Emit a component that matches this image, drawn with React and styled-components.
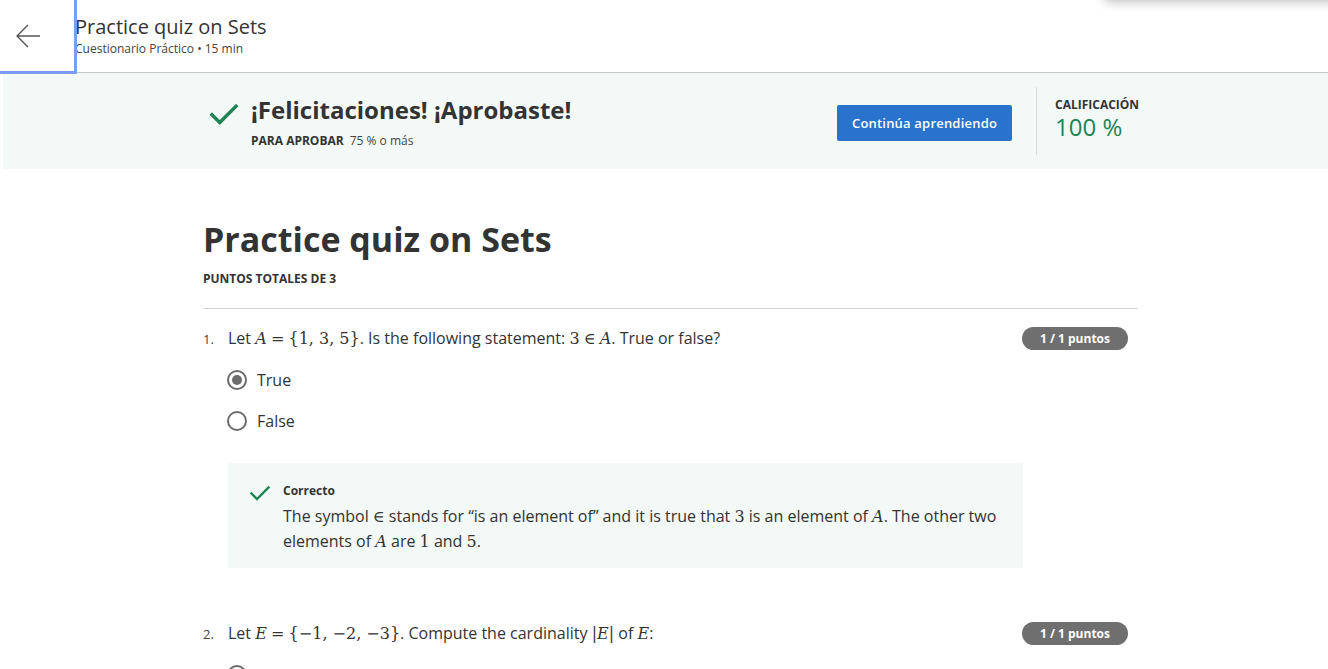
import React from 'react';
import styled, { createGlobalStyle } from 'styled-components';

const COLORS = {
  TEXT: '#373a3c',
  MUTED: '#555',
  GREEN: '#1f8354',
  MINT: '#f2f9f6',
  BLUE: '#2a73cc',
  BADGE: '#6f6f6f',
  LINE: '#d6d6d6',
};

const GlobalStyle = createGlobalStyle`
  html, body {
    margin: 0;
    padding: 0;
    background: #fff;
    font-family: "Open Sans", "Noto Sans", sans-serif;
    color: ${COLORS.TEXT};
  }
`;

const Root = styled.div`
  width: 1328px;
  height: 669px;
  overflow: hidden;
  position: relative;
`;

const TopShadow = styled.div`
  position: absolute;
  top: -40px;
  left: 1105px;
  width: 260px;
  height: 40px;
  background: #fff;
  box-shadow: 0 2px 10px rgba(0, 0, 0, 0.25);
`;

const Header = styled.header`
  height: 72px;
  display: flex;
  align-items: flex-start;
  border-bottom: 1px solid #c8c8c8;
`;

const BackBtn = styled.button`
  width: 77px;
  height: 74px;
  flex-shrink: 0;
  box-sizing: border-box;
  border: none;
  border-right: 3px solid #7b9cf5;
  border-bottom: 3px solid #7b9cf5;
  background: #fff;
  display: flex;
  align-items: center;
  padding: 0 0 0 15px;
  margin-bottom: -2px;
  position: relative;
  z-index: 1;
`;

const HeaderText = styled.div`
  padding-top: 13px;
  margin-left: -2px;
`;

const HeaderTitle = styled.div`
  font-size: 20px;
  line-height: 28px;
  color: #333;
`;

const HeaderSub = styled.div`
  font-size: 12px;
  line-height: 16px;
  color: #444;
`;

const Banner = styled.section`
  margin-left: 3px;
  height: 96px;
  background: ${COLORS.MINT};
  display: flex;
  align-items: flex-start;
  padding-left: 204px;
  box-sizing: border-box;
`;

const BannerMain = styled.div`
  display: flex;
  gap: 10px;
  padding-top: 21px;
  width: 630px;
`;

const CheckWrap = styled.div`
  padding-top: ${(p) => p.top || 0}px;
`;

const BannerTitle = styled.h2`
  margin: 0;
  font-size: 24px;
  line-height: 32px;
  font-weight: 700;
  color: #333;
`;

const PassLine = styled.div`
  margin-top: 7px;
  font-size: 12px;
  line-height: 16px;
  color: #444;

  b {
    font-weight: 700;
    color: #333;
    margin-right: 6px;
  }
`;

const PrimaryBtn = styled.button`
  margin-top: 32px;
  width: 175px;
  height: 36px;
  background: ${COLORS.BLUE};
  color: #fff;
  border: none;
  border-radius: 2px;
  font-family: inherit;
  font-size: 13px;
  font-weight: 600;
  letter-spacing: 0.2px;
`;

const Divider = styled.div`
  width: 1px;
  height: 68px;
  margin: 14px 18px 0 24px;
  background: #dcdcdc;
`;

const Grade = styled.div`
  padding-top: 24px;
`;

const GradeLabel = styled.div`
  font-size: 12px;
  line-height: 16px;
  font-weight: 700;
  color: #333;
`;

const GradeValue = styled.div`
  font-size: 24px;
  line-height: 28px;
  color: ${COLORS.GREEN};
`;

const Content = styled.main`
  width: 935px;
  margin-left: 203px;
  padding-top: 49px;
`;

const Title = styled.h1`
  margin: 0;
  font-size: 34px;
  line-height: 42px;
  font-weight: 700;
  color: #333;
`;

const Points = styled.div`
  margin-top: 11px;
  font-size: 12px;
  line-height: 16px;
  font-weight: 700;
  color: #333;
  padding-bottom: 21px;
  border-bottom: 1px solid ${COLORS.LINE};
`;

const Question = styled.section`
  padding-top: ${(p) => p.top}px;
`;

const QRow = styled.div`
  display: flex;
  align-items: center;
  padding-right: 10px;
`;

const QNum = styled.span`
  width: 25px;
  font-size: 13px;
  color: #444;
`;

const QText = styled.div`
  flex: 1;
  font-size: 16px;
  line-height: 24px;
  color: #333;
`;

const M = styled.span`
  font-family: "DejaVu Serif", "Liberation Serif", serif;
  font-style: ${(p) => (p.up ? 'normal' : 'italic')};
  font-size: 16px;
`;

const Badge = styled.span`
  background: ${COLORS.BADGE};
  color: #fff;
  font-size: 12px;
  font-weight: 700;
  border-radius: 12px;
  height: 23px;
  line-height: 23px;
  padding: 0 18px;
`;

const Options = styled.div`
  margin-top: 17px;
  margin-left: 24px;
  display: flex;
  flex-direction: column;
  gap: 17px;
`;

const Option = styled.label`
  display: flex;
  align-items: center;
  gap: 10px;
  font-size: 16px;
  line-height: 24px;
  color: #333;
`;

const Radio = styled.span`
  width: 20px;
  height: 20px;
  box-sizing: border-box;
  border-radius: 50%;
  border: 2px solid #6b6b6b;
  display: flex;
  align-items: center;
  justify-content: center;

  &::after {
    content: '';
    width: 10px;
    height: 10px;
    border-radius: 50%;
    background: ${(p) => (p.checked ? '#6b6b6b' : 'transparent')};
  }
`;

const Feedback = styled.div`
  margin: 30px 0 0 25px;
  width: 795px;
  height: 105px;
  box-sizing: border-box;
  background: ${COLORS.MINT};
  display: flex;
  gap: 11px;
  padding: 18px 20px 0 20px;
`;

const FbLabel = styled.div`
  font-size: 12px;
  line-height: 18px;
  font-weight: 700;
  color: #333;
  margin-top: 1px;
`;

const FbText = styled.p`
  margin: 4px 0 0;
  font-size: 16px;
  line-height: 24px;
  color: #333;
`;

const Check = ({ size = 30 }) => (
  <svg width={size} height={size} viewBox="0 0 24 24" fill="none">
    <path d="M3.5 12.5l5.5 5.5L20.5 6.5" stroke={COLORS.GREEN} strokeWidth="2.4" strokeLinecap="square" />
  </svg>
);

const Arrow = () => (
  <svg width="26" height="26" viewBox="0 0 26 26" fill="none">
    <path d="M25 13H2M13 2L2 13l11 11" stroke="#555" strokeWidth="1.4" />
  </svg>
);

function App() {
  return (
    <Root>
      <GlobalStyle />
      <TopShadow />
      <Header>
        <BackBtn aria-label="Volver">
          <Arrow />
        </BackBtn>
        <HeaderText>
          <HeaderTitle>Practice quiz on Sets</HeaderTitle>
          <HeaderSub>Cuestionario Práctico • 15 min</HeaderSub>
        </HeaderText>
      </Header>

      <Banner>
        <BannerMain>
          <CheckWrap top={3}>
            <Check size={34} />
          </CheckWrap>
          <div>
            <BannerTitle>¡Felicitaciones! ¡Aprobaste!</BannerTitle>
            <PassLine>
              <b>PARA APROBAR</b>75 % o más
            </PassLine>
          </div>
        </BannerMain>
        <PrimaryBtn>Continúa aprendiendo</PrimaryBtn>
        <Divider />
        <Grade>
          <GradeLabel>CALIFICACIÓN</GradeLabel>
          <GradeValue>100 %</GradeValue>
        </Grade>
      </Banner>

      <Content>
        <Title>Practice quiz on Sets</Title>
        <Points>PUNTOS TOTALES DE 3</Points>

        <Question top={17}>
          <QRow>
            <QNum>1.</QNum>
            <QText>
              Let <M>A</M> <M up>=</M> <M up>{'{1, 3, 5}'}</M>. Is the following statement: <M up>3</M> <M up>∈</M> <M>A</M>. True or false?
            </QText>
            <Badge>1 / 1 puntos</Badge>
          </QRow>
          <Options>
            <Option>
              <Radio checked />
              True
            </Option>
            <Option>
              <Radio />
              False
            </Option>
          </Options>
          <Feedback>
            <CheckWrap top={0}>
              <Check size={24} />
            </CheckWrap>
            <div>
              <FbLabel>Correcto</FbLabel>
              <FbText>
                The symbol <M up>∈</M> stands for “is an element of” and it is true that <M up>3</M> is an element of <M>A</M>. The other two elements of <M>A</M> are <M up>1</M> and <M up>5</M>.
              </FbText>
            </div>
          </Feedback>
        </Question>

        <Question top={53}>
          <QRow>
            <QNum>2.</QNum>
            <QText>
              Let <M>E</M> <M up>=</M> <M up>{'{−1, −2, −3}'}</M>. Compute the cardinality <M up>|</M><M>E</M><M up>|</M> of <M>E</M>:
            </QText>
            <Badge>1 / 1 puntos</Badge>
          </QRow>
          <Options>
            <Option>
              <Radio />
              3
            </Option>
          </Options>
        </Question>
      </Content>
    </Root>
  );
}

export default App;
